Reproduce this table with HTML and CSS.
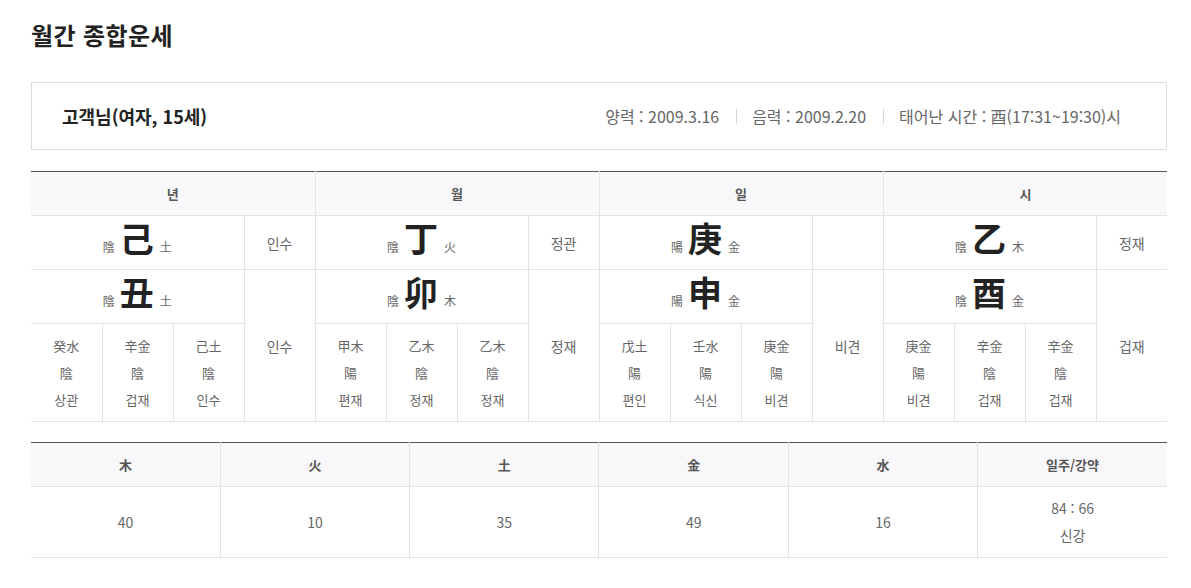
FILE: index.html
```html
<!DOCTYPE html>
<html lang="ko">
<head>
<meta charset="utf-8">
<title>월간 종합운세</title>
<link rel="stylesheet" href="styles.css">
</head>
<body>
<div class="page">
  <h1 class="title">월간 종합운세</h1>

  <div class="info">
    <div class="info-name">고객님(여자, 15세)</div>
    <ul class="info-dates">
      <li>양력 : 2009.3.16</li>
      <li>음력 : 2009.2.20</li>
      <li>태어난 시간 : 酉(17:31~19:30)시</li>
    </ul>
  </div>

  <table class="saju">
    <colgroup>
      <col><col><col><col><col><col><col><col>
      <col><col><col><col><col><col><col><col>
    </colgroup>
    <thead>
      <tr>
        <th colspan="4">년</th>
        <th colspan="4">월</th>
        <th colspan="4">일</th>
        <th colspan="4">시</th>
      </tr>
    </thead>
    <tbody>
      <tr class="row-main">
        <td colspan="3" class="pillar"><span class="yy">陰</span><span class="big">己</span><span class="el">土</span></td>
        <td class="side">인수</td>
        <td colspan="3" class="pillar"><span class="yy">陰</span><span class="big">丁</span><span class="el">火</span></td>
        <td class="side">정관</td>
        <td colspan="3" class="pillar"><span class="yy">陽</span><span class="big">庚</span><span class="el">金</span></td>
        <td class="side"></td>
        <td colspan="3" class="pillar"><span class="yy">陰</span><span class="big">乙</span><span class="el">木</span></td>
        <td class="side">정재</td>
      </tr>
      <tr class="row-main">
        <td colspan="3" class="pillar"><span class="yy">陰</span><span class="big">丑</span><span class="el">土</span></td>
        <td rowspan="2" class="side">인수</td>
        <td colspan="3" class="pillar"><span class="yy">陰</span><span class="big">卯</span><span class="el">木</span></td>
        <td rowspan="2" class="side">정재</td>
        <td colspan="3" class="pillar"><span class="yy">陽</span><span class="big">申</span><span class="el">金</span></td>
        <td rowspan="2" class="side">비견</td>
        <td colspan="3" class="pillar"><span class="yy">陰</span><span class="big">酉</span><span class="el">金</span></td>
        <td rowspan="2" class="side">겁재</td>
      </tr>
      <tr class="row-sub">
        <td>癸水<br>陰<br>상관</td>
        <td>辛金<br>陰<br>겁재</td>
        <td>己土<br>陰<br>인수</td>
        <td>甲木<br>陽<br>편재</td>
        <td>乙木<br>陰<br>정재</td>
        <td>乙木<br>陰<br>정재</td>
        <td>戊土<br>陽<br>편인</td>
        <td>壬水<br>陽<br>식신</td>
        <td>庚金<br>陽<br>비견</td>
        <td>庚金<br>陽<br>비견</td>
        <td>辛金<br>陰<br>겁재</td>
        <td>辛金<br>陰<br>겁재</td>
      </tr>
    </tbody>
  </table>

  <table class="ohaeng">
    <thead>
      <tr>
        <th>木</th><th>火</th><th>土</th><th>金</th><th>水</th><th>일주/강약</th>
      </tr>
    </thead>
    <tbody>
      <tr>
        <td>40</td><td>10</td><td>35</td><td>49</td><td>16</td><td>84 : 66<br>신강</td>
      </tr>
    </tbody>
  </table>
</div>
</body>
</html>
```

FILE: styles.css
```css
html, body {
  margin: 0;
  padding: 0;
  background: #fff;
}

body {
  font-family: "Noto Sans CJK KR", "Noto Sans", "Liberation Sans", sans-serif;
  color: #333;
}

.page {
  width: 1136px;
  padding: 19px 24px 0 31px;
}

.title {
  margin: 0;
  font-size: 24px;
  line-height: 32px;
  font-weight: 700;
  color: #222;
  letter-spacing: 0.4px;
}

.info {
  margin-top: 31px;
  height: 66px;
  border: 1px solid #ddd;
  padding: 0 45px 0 30px;
  display: flex;
  align-items: center;
  justify-content: space-between;
}

.info-name {
  font-size: 18px;
  font-weight: 700;
  color: #222;
}

.info-dates {
  list-style: none;
  margin: 0;
  padding: 0;
  display: flex;
  align-items: center;
  font-size: 16px;
  color: #666;
}

.info-dates li {
  line-height: 15px;
}

.info-dates li + li {
  margin-left: 17px;
  padding-left: 15px;
  border-left: 1px solid #d5d5d5;
}

table {
  width: 1136px;
  border-collapse: collapse;
  table-layout: fixed;
  border-left: hidden;
  border-right: hidden;
}

th, td {
  border: 1px solid #e3e3e3;
  text-align: center;
  padding: 0;
}

th {
  background: #f8f8fa;
  font-size: 13px;
  font-weight: 700;
  color: #555;
  height: 43px;
  border-top: 1px solid #555;
}

.saju {
  margin-top: 21px;
}

.saju col {
  width: 71px;
}

.row-main td {
  height: 53px;
  vertical-align: middle;
}

.pillar {
  white-space: nowrap;
  line-height: 40px;
}

.big {
  font-size: 34px;
  font-weight: 700;
  color: #222;
  margin: 0 6px 0 5px;
  vertical-align: baseline;
}

.yy, .el {
  font-size: 12px;
  color: #666;
}

.side {
  font-size: 14px;
  color: #666;
}

.row-sub td {
  height: 97px;
  font-size: 13px;
  line-height: 27px;
  color: #666;
  vertical-align: middle;
}

.ohaeng {
  margin-top: 20px;
}

.ohaeng td {
  height: 70px;
  font-size: 14px;
  line-height: 27px;
  color: #666;
}
```
